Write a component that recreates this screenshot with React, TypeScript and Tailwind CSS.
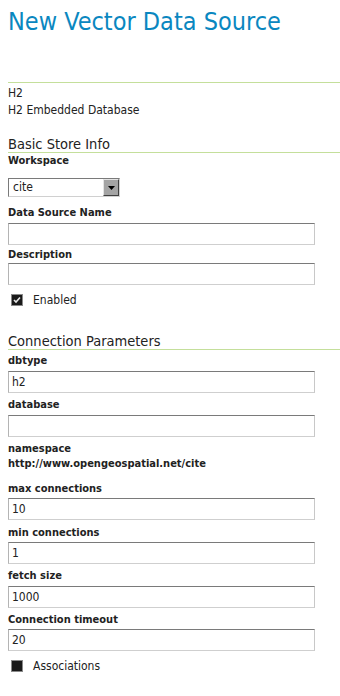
import React from "react";

const FONT = { fontFamily: "'DejaVu Sans Condensed', 'DejaVu Sans', sans-serif" };

function Label({ children, mt }: { children: React.ReactNode; mt: string }) {
  return <div className={`${mt} text-[11px] leading-[14px] font-bold text-[#222]`}>{children}</div>;
}

function Input({ value, mt }: { value?: string; mt: string }) {
  return (
    <div
      className={`${mt} w-[307px] h-[22px] border border-t-[#7a7a7a] border-l-[#b4b4b4] border-r-[#c8c8c8] border-b-[#cfcfcf] bg-white pl-[3px] flex items-center text-[12px] text-[#222]`}
    >
      {value}
    </div>
  );
}

function Check({ checked, label, mt }: { checked: boolean; label: string; mt: string }) {
  return (
    <div className={`${mt} h-[14px] flex items-center`}>
      <div className="ml-[3px] w-[12px] h-[12px] border border-[#8a8a8a] bg-[#1a1a1a] flex items-center justify-center">
        {checked && (
          <svg width="8" height="8" viewBox="0 0 8 8">
            <path d="M1 4 L3 6 L7 1.5" stroke="#e8e8e8" strokeWidth="1.6" fill="none" />
          </svg>
        )}
      </div>
      <span className="ml-[10px] text-[12px] leading-[14px] text-[#222]">{label}</span>
    </div>
  );
}

export default function App() {
  return (
    <div className="w-[340px] h-[696px] overflow-hidden bg-white pl-2 text-[#222]" style={FONT}>
      <div className="pt-[7px] text-[25px] leading-[30px] text-[#0a87c0]">New Vector Data Source</div>
      <div className="mt-[45px] h-px bg-[#c4df9b]" />
      <div className="mt-[2px] text-[12px] leading-[17px]">H2</div>
      <div className="text-[12px] leading-[17px]">H2 Embedded Database</div>

      <div className="mt-[17px] text-[14.5px] leading-[16px] text-[#222] border-b border-[#c4df9b]">Basic Store Info</div>
      <Label mt="mt-[1px]">Workspace</Label>
      <div className="mt-[10px] w-[112px] h-[19px] flex border border-t-[#7a7a7a] border-l-[#7a7a7a] border-r-[#d0d0d0] border-b-[#d0d0d0] bg-white">
        <div className="flex-1 pl-[4px] text-[12px] leading-[17px]">cite</div>
        <div className="w-[16px] h-[17px] bg-[#a4a4a4] border border-t-[#e4e4e4] border-l-[#e4e4e4] border-r-[#404040] border-b-[#404040] flex items-center justify-center">
          <svg width="7" height="4" viewBox="0 0 7 4">
            <path d="M0 0 H7 L3.5 4 Z" fill="#000" />
          </svg>
        </div>
      </div>
      <Label mt="mt-[9px]">Data Source Name</Label>
      <Input mt="mt-[3px]" />
      <Label mt="mt-[3px]">Description</Label>
      <Input mt="mt-[1px]" />
      <Check mt="mt-[8px]" checked label="Enabled" />

      <div className="mt-[26px] text-[14.5px] leading-[16px] text-[#222] border-b border-[#c4df9b]">Connection Parameters</div>
      <Label mt="mt-[4px]">dbtype</Label>
      <Input mt="mt-[3px]" value="h2" />
      <Label mt="mt-[5px]">database</Label>
      <Input mt="mt-[3px]" />
      <Label mt="mt-[5px]">namespace</Label>
      <Label mt="mt-[1px]">http://www.opengeospatial.net/cite</Label>
      <Label mt="mt-[11px]">max connections</Label>
      <Input mt="mt-[2px]" value="10" />
      <Label mt="mt-[6px]">min connections</Label>
      <Input mt="mt-[2px]" value="1" />
      <Label mt="mt-[5px]">fetch size</Label>
      <Input mt="mt-[3px]" value="1000" />
      <Label mt="mt-[5px]">Connection timeout</Label>
      <Input mt="mt-[2px]" value="20" />
      <Check mt="mt-[8px]" checked={false} label="Associations" />
    </div>
  );
}
